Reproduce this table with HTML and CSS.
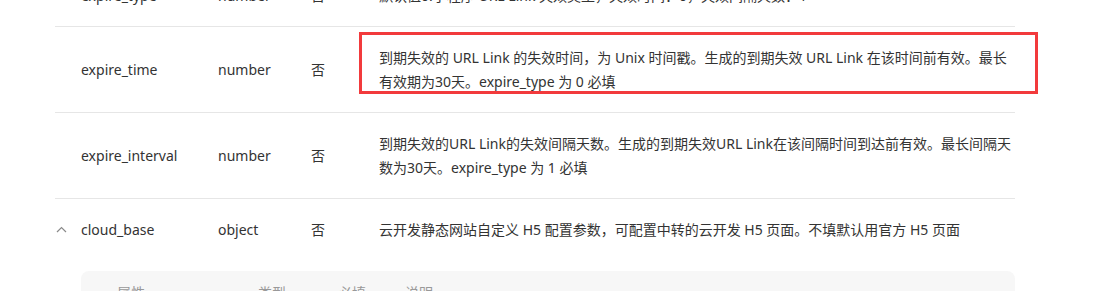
FILE: index.html
```html
<!DOCTYPE html>
<html lang="zh-CN">
<head>
<meta charset="utf-8">
<title>URL Link 参数</title>
<link rel="stylesheet" href="styles.css">
</head>
<body>
<div class="page">
  <div class="params">
    <div class="row">
      <div class="toggle"></div>
      <div class="cell">expire_type</div>
      <div class="cell">number</div>
      <div class="cell">否</div>
      <div class="cell desc">默认值0.小程序 URL Link 失效类型，失效时间：0，失效间隔天数：1</div>
    </div>
    <div class="row">
      <div class="toggle"></div>
      <div class="cell">expire_time</div>
      <div class="cell">number</div>
      <div class="cell">否</div>
      <div class="cell desc">到期失效的 URL Link 的失效时间，为 Unix 时间戳。生成的到期失效 URL Link 在该时间前有效。最长有效期为30天。expire_type 为 0 必填<span class="mark"></span></div>
    </div>
    <div class="row">
      <div class="toggle"></div>
      <div class="cell">expire_interval</div>
      <div class="cell">number</div>
      <div class="cell">否</div>
      <div class="cell desc">到期失效的URL Link的失效间隔天数。生成的到期失效URL Link在该间隔时间到达前有效。最长间隔天数为30天。expire_type 为 1 必填</div>
    </div>
    <div class="row expanded">
      <div class="toggle">
        <svg class="chev" width="11" height="7" viewBox="0 0 11 7"><polyline points="1,6 5.5,1.5 10,6" fill="none" stroke="#8a8a8a" stroke-width="1.2"/></svg>
      </div>
      <div class="cell">cloud_base</div>
      <div class="cell">object</div>
      <div class="cell">否</div>
      <div class="cell desc">云开发静态网站自定义 H5 配置参数，可配置中转的云开发 H5 页面。不填默认用官方 H5 页面</div>
      <div class="sub">
        <div class="sub-head">
          <div>属性</div>
          <div>类型</div>
          <div>必填</div>
          <div>说明</div>
        </div>
      </div>
    </div>
  </div>
</div>
</body>
</html>
```

FILE: styles.css
```css
html, body {
  margin: 0;
  padding: 0;
  background: #ffffff;
}
body {
  font-family: "Noto Sans", "Noto Sans CJK SC", sans-serif;
  font-size: 14px;
  line-height: 24px;
  color: #333333;
  overflow: hidden;
}
.page {
  width: 1107px;
  height: 291px;
  overflow: hidden;
}
.params {
  margin: -36px 0 0 55px;
  width: 960px;
}
.row {
  display: grid;
  grid-template-columns: 26px 137px 93px 68px 1fr;
  align-items: center;
  border-top: 1px solid #e6e6e6;
}
.cell {
  padding: 19px 0 18px;
}
.desc {
  position: relative;
}
.toggle {
  display: flex;
  align-items: center;
  height: 24px;
}
.expanded .toggle {
  padding: 19px 0 18px;
}
.chev {
  display: block;
  margin-left: 1px;
  margin-top: -1px;
}
.mark {
  position: absolute;
  left: -20px;
  right: -23px;
  top: 5px;
  bottom: 18px;
  border: 3px solid #f23a3c;
  pointer-events: none;
}
.expanded {
  align-items: start;
}
.sub {
  grid-column: 2 / -1;
  margin-top: 11px;
  background: #f7f7f7;
  border-radius: 8px;
  padding: 10px 0;
}
.sub-head {
  display: grid;
  grid-template-columns: 141px 80px 67px 1fr;
  padding-left: 36px;
  color: #999999;
}
```
